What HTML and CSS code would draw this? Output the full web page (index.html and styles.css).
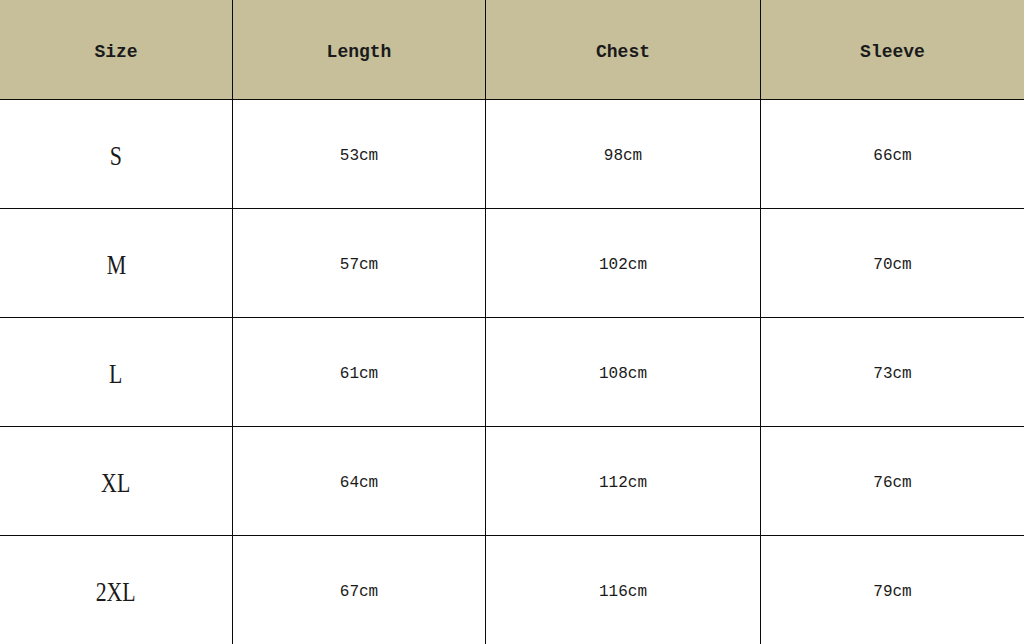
FILE: index.html
```html
<!DOCTYPE html>
<html>
<head>
<meta charset="utf-8">
<link rel="stylesheet" href="styles.css">
</head>
<body>
<div class="table">
  <div class="cell head">Size</div>
  <div class="cell head">Length</div>
  <div class="cell head">Chest</div>
  <div class="cell head last-col">Sleeve</div>

  <div class="cell size"><span>S</span></div>
  <div class="cell val">53cm</div>
  <div class="cell val">98cm</div>
  <div class="cell val last-col">66cm</div>

  <div class="cell size"><span>M</span></div>
  <div class="cell val">57cm</div>
  <div class="cell val">102cm</div>
  <div class="cell val last-col">70cm</div>

  <div class="cell size"><span>L</span></div>
  <div class="cell val">61cm</div>
  <div class="cell val">108cm</div>
  <div class="cell val last-col">73cm</div>

  <div class="cell size"><span>XL</span></div>
  <div class="cell val">64cm</div>
  <div class="cell val">112cm</div>
  <div class="cell val last-col">76cm</div>

  <div class="cell size last-row"><span>2XL</span></div>
  <div class="cell val last-row">67cm</div>
  <div class="cell val last-row">116cm</div>
  <div class="cell val last-col last-row">79cm</div>
</div>
</body>
</html>
```
FILE: styles.css
```css
html, body {
  margin: 0;
  padding: 0;
  background: #ffffff;
  width: 1024px;
  height: 644px;
  overflow: hidden;
}
.table {
  display: grid;
  grid-template-columns: 233px 253px 275px 263px;
  grid-template-rows: 100px 109px 109px 109px 109px 108px;
  width: 1024px;
  height: 644px;
}
.cell {
  display: flex;
  align-items: center;
  justify-content: center;
  border-right: 1px solid #0a0a0a;
  border-bottom: 1px solid #0a0a0a;
  box-sizing: border-box;
  color: #1a1a1a;
}
.last-col { border-right: none; }
.last-row { border-bottom: none; }
.head {
  background: #c6bf9a;
  font-family: "Liberation Mono", "DejaVu Sans Mono", monospace;
  font-weight: bold;
  font-size: 18px;
  padding-top: 4px;
}
.val {
  font-family: "Liberation Mono", "DejaVu Sans Mono", monospace;
  font-size: 16px;
  padding-top: 4px;
}
.size {
  font-family: "Liberation Serif", "DejaVu Serif", serif;
  font-size: 28px;
  padding-top: 3px;
}
.size span {
  display: inline-block;
  transform: scaleX(0.78);
}
```
